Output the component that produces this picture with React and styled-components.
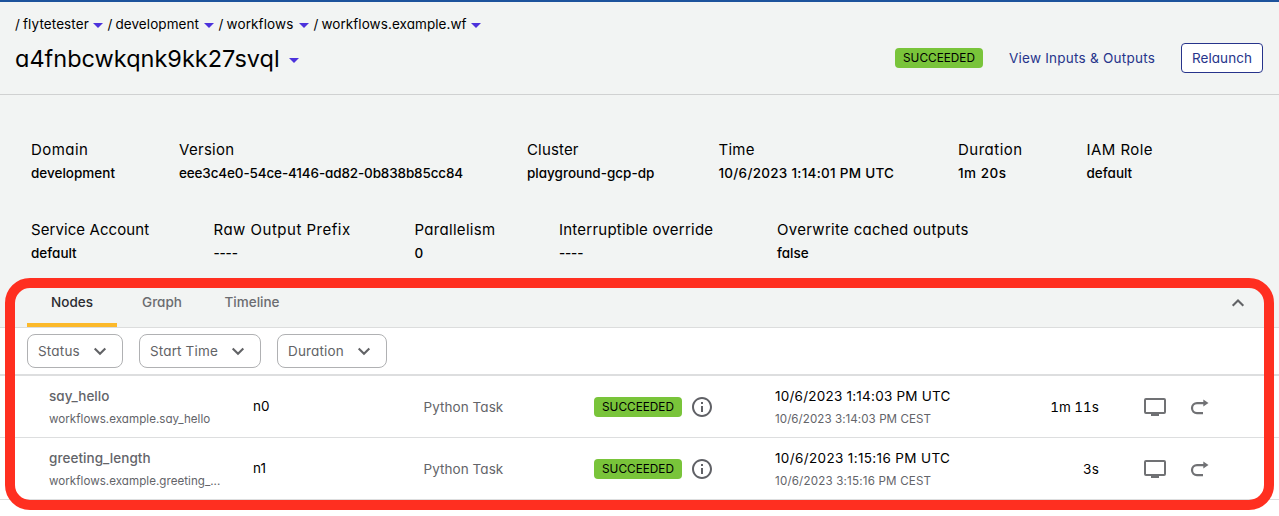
import React from "react";
import styled, { createGlobalStyle } from "styled-components";

const Global = createGlobalStyle`
  *, *::before, *::after { box-sizing: border-box; }
  body {
    margin: 0;
    background: #fff;
    color: #000;
    font-family: Inter, "Open Sans", sans-serif;
    font-feature-settings: "cv11", "ss03";
    overflow: hidden;
  }
  button { font: inherit; font-feature-settings: inherit; color: inherit; margin: 0; }
`;

const Text = styled.span`
  display: block;
  white-space: nowrap;
  font-size: ${(p) => p.$size || 13.5}px;
  line-height: ${(p) => p.$line || 20}px;
  font-weight: ${(p) => p.$weight || 400};
  color: ${(p) => p.$color || "#000"};
  letter-spacing: ${(p) => p.$track || 0}px;
`;

const Page = styled.div`
  position: relative;
  width: 1279px;
  height: 516px;
  overflow: hidden;
`;

const Header = styled.header`
  display: flex;
  justify-content: space-between;
  height: 95px;
  padding: 12px 16px 0 15px;
  background: #f2f4f3;
  border-top: 2px solid #1d539c;
  border-bottom: 1px solid #d0d1d1;
`;

const Crumbs = styled.nav`
  display: flex;
  height: 20px;
`;

const Crumb = styled.div`
  display: flex;
  align-items: center;
  width: ${(p) => p.$width}px;
`;

const CrumbLabel = styled(Text)`
  width: ${(p) => p.$label}px;
  word-spacing: -0.9px;
`;

const Title = styled.div`
  display: flex;
  align-items: center;
  height: 32px;
  margin-top: 9px;
`;

const TitleText = styled(Text)`
  width: 274px;
`;

const Caret = styled.i`
  flex: none;
  width: 0;
  height: 0;
  margin-top: 2px;
  border: 5px solid transparent;
  border-top-color: #4c32dc;
  border-bottom: 0;
`;

const Actions = styled.div`
  display: flex;
  align-items: center;
  height: 30px;
  margin-top: 29px;
`;

const Badge = styled.span`
  display: flex;
  align-items: center;
  justify-content: center;
  width: 88px;
  height: 20px;
  border-radius: 4px;
  background: #79c43a;
  font-size: 11.8px;
  letter-spacing: 0;
`;

const Link = styled(Text)`
  width: 146px;
  margin: 0 26px;
`;

const Relaunch = styled.button`
  width: 82px;
  height: 30px;
  padding: 0;
  border: 1px solid #27348b;
  border-radius: 4px;
  background: #fff;
  color: #27348b;
  font-size: 13.5px;
  letter-spacing: 0.05px;
`;

const Details = styled.section`
  height: 183px;
  padding: 43px 31px 0;
  background: #f2f4f3;
`;

const DetailRow = styled.div`
  display: flex;
  height: 80px;
`;

const Detail = styled.div`
  flex: none;
  width: ${(p) => p.$width}px;
`;

const Tabs = styled.div`
  display: flex;
  height: 50px;
  padding: 0 33px 0 27px;
  background: #f2f4f3;
  border-bottom: 1px solid #dcdddd;
`;

const Tab = styled.div`
  display: flex;
  justify-content: center;
  width: 90px;
  height: 49px;
  padding-top: 14px;
  border-bottom: 4px solid ${(p) => (p.$active ? "#fcb92a" : "transparent")};
`;

const Collapse = styled.div`
  margin: 17px 0 0 auto;
`;

const Filters = styled.div`
  display: flex;
  gap: 16px;
  height: 48px;
  padding: 6px 27px 0;
  border-bottom: 2px solid #dddedf;
`;

const Filter = styled.button`
  display: flex;
  align-items: center;
  justify-content: space-between;
  width: ${(p) => p.$width}px;
  height: 34px;
  padding: 0 14px 0 10px;
  border: 1px solid #b0b1b3;
  border-radius: 8px;
  background: #fff;
`;

const Row = styled.div`
  display: grid;
  grid-template-columns: 204px 170.5px 170.5px 181px 224px 100px 68px 42px;
  align-items: center;
  height: 62px;
  padding-left: 49px;
  border-bottom: 1px solid #dddedf;
`;

const NameCell = styled.div`
  width: 172px;
`;

const SubText = styled(Text)`
  padding-top: 1px;
  margin-bottom: -1px;
`;

const NodeId = styled(Text)`
  padding-bottom: 1px;
`;

const StatusCell = styled.div`
  display: flex;
  align-items: center;
  gap: 8px;
`;

const Duration = styled(Text)`
  justify-self: end;
  font-feature-settings: "cv11", "ss03", "tnum";
`;

const Icon = styled.svg`
  display: block;
`;

const RowIcon = styled(Icon)`
  justify-self: end;
`;

const Highlight = styled.div`
  position: absolute;
  top: 278px;
  left: 5px;
  width: 1269px;
  height: 232px;
  border: 10px solid #ff2f20;
  border-radius: 25px;
  pointer-events: none;
`;

const Chevron = ({ up }) => (
  <Icon width="16" height="16" viewBox="0 0 16 16" fill="none" stroke="#626366" strokeWidth="2.1">
    <path d={up ? "M2.7 10.7 8 5.5l5.3 5.2" : "M2.7 5.4 8 10.7l5.3-5.3"} />
  </Icon>
);

const Info = () => (
  <Icon width="24" height="24" viewBox="0 0 24 24" fill="#606166">
    <path d="M11 7h2v2h-2zm0 4h2v6h-2zm1-9C6.48 2 2 6.48 2 12s4.48 10 10 10 10-4.48 10-10S17.52 2 12 2zm0 18c-4.41 0-8-3.59-8-8s3.59-8 8-8 8 3.59 8 8-3.59 8-8 8z" />
  </Icon>
);

const crumbs = [
  ["flytetester", 92.5, 78, 0.1],
  ["development", 111, 96.5, 0.08],
  ["workflows", 95, 80.5, 0.12],
  ["workflows.example.wf", 170, 157.5, 0.07],
];

const details = [
  [
    ["Domain", "development", 148, 0.45],
    ["Version", "eee3c4e0-54ce-4146-ad82-0b838b85cc84", 348, 0.3, -0.14],
    ["Cluster", "playground-gcp-dp", 191.5, 0.15],
    ["Time", "10/6/2023 1:14:01 PM UTC", 239.5, 0.25, 0.27],
    ["Duration", "1m 20s", 128.5, 0.5, 0.5],
    ["IAM Role", "default", 80, 0.45],
  ],
  [
    ["Service Account", "default", 182.5, 0.08],
    ["Raw Output Prefix", "----", 201, 0.5, -0.2],
    ["Parallelism", "0", 144.5, 0.3],
    ["Interruptible override", "----", 218, 0.23, -0.2],
    ["Overwrite cached outputs", "false", 200, 0.3],
  ],
];

const filters = [["Status", 96, 0.2], ["Start Time", 122, 0.15], ["Duration", 110, 0.15]];

const nodes = [
  ["say_hello", "workflows.example.say_hello", "n0", "10/6/2023 1:14:03 PM UTC", "10/6/2023 3:14:03 PM CEST", "1m 11s", 0.23, 0.05],
  ["greeting_length", "workflows.example.greeting_...", "n1", "10/6/2023 1:15:16 PM UTC", "10/6/2023 3:15:16 PM CEST", "3s", 0.36, 0.18],
];

export default function App() {
  return (
    <Page>
      <Global />
      <Header>
        <div>
          <Crumbs>
            {crumbs.map(([name, width, label, track]) => (
              <Crumb key={name} $width={width}>
                <CrumbLabel $label={label} $track={track}>/ {name}</CrumbLabel>
                <Caret />
              </Crumb>
            ))}
          </Crumbs>
          <Title>
            <TitleText $size={23.5} $line={32}>a4fnbcwkqnk9kk27svql</TitleText>
            <Caret />
          </Title>
        </div>
        <Actions>
          <Badge>SUCCEEDED</Badge>
          <Link $color="#27348b" $track={0.24}>View Inputs &amp; Outputs</Link>
          <Relaunch>Relaunch</Relaunch>
        </Actions>
      </Header>
      <Details>
        {details.map((row, i) => (
          <DetailRow key={i}>
            {row.map(([label, value, width, track, valueTrack]) => (
              <Detail key={label} $width={width}>
                <Text $size={15} $line={24} $track={track}>{label}</Text>
                <Text $line={22} $weight={500} $track={valueTrack}>{value}</Text>
              </Detail>
            ))}
          </DetailRow>
        ))}
      </Details>
      <Tabs>
        <Tab $active><Text $weight={500} $color="#2b2c31">Nodes</Text></Tab>
        <Tab><Text $weight={500} $color="#6b6c70">Graph</Text></Tab>
        <Tab><Text $weight={500} $color="#6b6c70">Timeline</Text></Tab>
        <Collapse><Chevron up /></Collapse>
      </Tabs>
      <Filters>
        {filters.map(([name, width, track]) => (
          <Filter key={name} $width={width}>
            <Text $color="#626366" $track={track}>{name}</Text>
            <Chevron />
          </Filter>
        ))}
      </Filters>
      {nodes.map(([name, path, id, utc, local, duration, utcTrack, localTrack]) => (
        <Row key={id}>
          <NameCell>
            <Text $line={22} $weight={500} $color="#636469" $track={0.05}>{name}</Text>
            <SubText $line={22} $size={11.6} $color="#636469" $track={0.03}>{path}</SubText>
          </NameCell>
          <NodeId>{id}</NodeId>
          <Text $color="#636469" $track={0.06}>Python Task</Text>
          <StatusCell>
            <Badge>SUCCEEDED</Badge>
            <Info />
          </StatusCell>
          <div>
            <Text $line={22} $track={utcTrack}>{utc}</Text>
            <SubText $line={22} $size={11.6} $color="#636469" $track={localTrack}>{local}</SubText>
          </div>
          <Duration>{duration}</Duration>
          <RowIcon width="24" height="20" viewBox="0 0 24 20" fill="none" stroke="#707174" strokeWidth="2">
            <rect x="2" y="2" width="20" height="14" rx="1" />
            <path d="M8 18h8" />
          </RowIcon>
          <RowIcon width="20" height="20" viewBox="0 0 20 20" fill="none" stroke="#707174" strokeWidth="2.2">
            <path d="M15 6.1H8a5 5 0 0 0 0 10H14" />
            <path d="M14.3 2.6v7l5.2-3.5z" fill="#707174" stroke="none" />
          </RowIcon>
        </Row>
      ))}
      <Highlight />
    </Page>
  );
}
